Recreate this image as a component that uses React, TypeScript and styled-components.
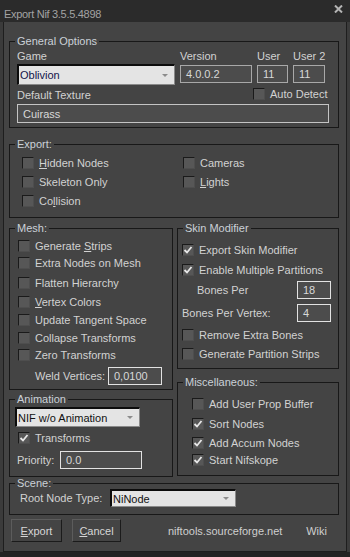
import React from 'react'
import styled, { createGlobalStyle } from 'styled-components'

const GlobalStyle = createGlobalStyle`
  html, body {
    margin: 0;
    padding: 0;
    background: #232323;
  }
  body {
    font-family: 'Liberation Sans', Arial, sans-serif;
    font-size: 11px;
    color: #d2d2d2;
  }
  * {
    box-sizing: border-box;
  }
`

const Window = styled.div`
  width: 350px;
  height: 552px;
  display: flex;
  flex-direction: column;
  background: #3b3b3b;
`

const TitleBar = styled.div`
  height: 22px;
  flex: none;
  background: #2b2b2b;
  display: flex;
  justify-content: space-between;
  padding: 0 7px 0 4px;
  color: #a3a3a3;
`

const Title = styled.span`
  line-height: 13px;
  margin-top: 8px;
  letter-spacing: -0.3px;
`

const Close = styled.svg`
  margin-top: 5px;
`

const Frame = styled.div`
  flex: 1;
  display: flex;
  padding: 0 3px;
`

const Body = styled.div`
  flex: 1;
  display: flex;
  flex-direction: column;
  background: #444444;
  border: 1px solid #1e1e1e;
  border-top: 0;
  padding: 13px 7px 0 5px;
`

const Group = styled.fieldset<{ $mt?: number }>`
  margin: ${({ $mt }) => $mt ?? 0}px 0 0;
  padding: 0;
  min-width: 0;
  border: 1px solid #181818;
`

const Legend = styled.legend`
  margin-left: 5px;
  padding: 0 2px;
  height: 13px;
  line-height: 13px;
  color: #cbd1d8;
`

const Content = styled.div<{ $pad: string }>`
  padding: ${({ $pad }) => $pad};
`

const Label = styled.span`
  line-height: 13px;
  white-space: nowrap;
`

const GeneralGrid = styled.div`
  display: grid;
  grid-template-columns: 158px 72px 31px 32px;
  column-gap: 5px;
  row-gap: 1px;
  align-items: start;
`

const TextureRow = styled.div`
  display: grid;
  grid-template-columns: 236px auto;
  height: 17px;
  align-items: start;
`

const Select = styled.div<{ $w: number; $h: number; $ink?: string }>`
  width: ${({ $w }) => $w}px;
  height: ${({ $h }) => $h}px;
  background: #e4e4e4;
  border-style: solid;
  border-width: 2px 1px 1px 2px;
  border-color: #0c0c0c #8a8a8a #8a8a8a #0c0c0c;
  padding-left: 1px;
  display: flex;
  align-items: center;
  justify-content: space-between;
  color: ${({ $ink }) => $ink ?? '#111'};
`

const Arrow = styled.span`
  width: 0;
  height: 0;
  border-left: 3px solid transparent;
  border-right: 3px solid transparent;
  border-top: 3px solid #8c8c8c;
  margin-right: 6px;
`

const Field = styled.div<{ $w?: number; $h: number; $mt?: number; $tone?: string }>`
  width: ${({ $w }) => ($w ? `${$w}px` : '100%')};
  height: ${({ $h }) => $h}px;
  margin-top: ${({ $mt }) => $mt ?? 0}px;
  background: #4c4c4c;
  border: 1px solid ${({ $tone }) => $tone ?? '#a8a8a8'};
  padding-left: 5px;
  display: flex;
  align-items: center;
  color: #d8d8d8;
`

const CheckRow = styled.div<{ $mt?: number }>`
  display: flex;
  align-items: center;
  gap: 5px;
  height: 12px;
  line-height: 12px;
  margin-top: ${({ $mt }) => $mt ?? 0}px;
  white-space: nowrap;
`

const Box = styled.span`
  width: 12px;
  height: 12px;
  flex: none;
  background: #575757;
  border: 1px solid;
  border-color: #1a1a1a #4e4e4e #4e4e4e #1a1a1a;
  display: flex;
  align-items: center;
  justify-content: center;
`

const ExportGrid = styled.div`
  display: grid;
  grid-template-columns: 161px 1fr;
  grid-auto-rows: 19px;
  align-items: center;
`

const Columns = styled.div`
  display: grid;
  grid-template-columns: 164px 162px;
  column-gap: 4px;
  align-items: start;
  margin-top: 4px;
`

const Column = styled.div`
  display: flex;
  flex-direction: column;
`

const SpinRow = styled.div<{ $cols: string; $mt?: number; $indent?: number }>`
  display: grid;
  grid-template-columns: ${({ $cols }) => $cols};
  align-items: center;
  margin-top: ${({ $mt }) => $mt ?? 0}px;
  padding-left: ${({ $indent }) => $indent ?? 0}px;
`

const Footer = styled.div`
  display: flex;
  align-items: center;
  margin-top: 4px;
  padding: 0 12px 0 2px;
`

const Button = styled.button<{ $w: number; $ml?: number }>`
  width: ${({ $w }) => $w}px;
  height: 23px;
  margin-left: ${({ $ml }) => $ml ?? 0}px;
  padding: 0;
  background: #444444;
  border: 1px solid;
  border-color: #5c5c5c #1b1b1b #1b1b1b #5c5c5c;
  color: #d6d6d6;
  font: inherit;
`

const Link = styled.span<{ $ml?: string }>`
  margin-left: ${({ $ml }) => $ml ?? '0'};
  color: #cfcfcf;
`

const Key = styled.u`
  text-underline-offset: 1px;
`

const Check = ({ on }: { on?: boolean }) => (
  <Box>
    {on && (
      <svg width="10" height="10" viewBox="0 0 10 10">
        <path d="M1.5 5 L4 7.5 L8.5 2" stroke="#e8e8e8" strokeWidth="1.8" fill="none" />
      </svg>
    )}
  </Box>
)

type OptionProps = {
  children: React.ReactNode
  on?: boolean
  mt?: number
}

const Option = ({ children, on, mt }: OptionProps) => (
  <CheckRow $mt={mt}>
    <Check on={on} />
    <span>{children}</span>
  </CheckRow>
)

const App = () => {
  return (
    <>
      <GlobalStyle />
      <Window>
        <TitleBar>
          <Title>Export Nif 3.5.5.4898</Title>
          <Close width="9" height="8" viewBox="0 0 9 8">
            <path d="M1 0.5 L8 7.5 M8 0.5 L1 7.5" stroke="#b4b4b4" strokeWidth="2" />
          </Close>
        </TitleBar>
        <Frame>
          <Body>
            <Group>
              <Legend>General Options</Legend>
              <Content $pad="2px 9px 4px 7px">
                <GeneralGrid>
                  <Label>Game</Label>
                  <Label>Version</Label>
                  <Label>User</Label>
                  <Label>User 2</Label>
                  <Select $w={158} $h={21} $ink="#14144a">
                    <span>Oblivion</span>
                    <Arrow />
                  </Select>
                  <Field $h={18} $mt={1}>4.0.0.2</Field>
                  <Field $h={18} $mt={1}>11</Field>
                  <Field $h={18} $mt={1}>11</Field>
                </GeneralGrid>
                <TextureRow>
                  <Label style={{ marginTop: 4 }}>Default Texture</Label>
                  <CheckRow $mt={3}>
                    <Check />
                    <span>Auto Detect</span>
                  </CheckRow>
                </TextureRow>
                <Field $h={19} $mt={2} $tone="#c4c4c4">
                  Cuirass
                </Field>
              </Content>
            </Group>

            <Group $mt={10}>
              <Legend>Export:</Legend>
              <Content $pad="2px 8px 7px 12px">
                <ExportGrid>
                  <Option>
                    <Key>H</Key>idden Nodes
                  </Option>
                  <Option>Cameras</Option>
                  <Option>Skeleton Only</Option>
                  <Option>
                    <Key>L</Key>ights
                  </Option>
                  <Option>
                    Co<Key>l</Key>lision
                  </Option>
                </ExportGrid>
              </Content>
            </Group>

            <Columns>
              <Column>
                <Group>
                  <Legend>Mesh:</Legend>
                  <Content $pad="5px 4px 4px 8px">
                    <Option>
                      Generate <Key>S</Key>trips
                    </Option>
                    <Option mt={5}>Extra Nodes on Mesh</Option>
                    <Option mt={8}>Flatten Hierarchy</Option>
                    <Option mt={7}>
                      <Key>V</Key>ertex Colors
                    </Option>
                    <Option mt={6}>Update Tangent Space</Option>
                    <Option mt={6}>Collapse Transforms</Option>
                    <Option mt={5}>Zero Transforms</Option>
                    <SpinRow $cols="73px 54px" $mt={6} $indent={17}>
                      <Label>Weld Vertices:</Label>
                      <Field $w={54} $h={18} $tone="#e2e2e2">
                        0,0100
                      </Field>
                    </SpinRow>
                  </Content>
                </Group>

                <Group $mt={3}>
                  <Legend>Animation</Legend>
                  <Content $pad="1px 4px 7px 5px">
                    <Select $w={125} $h={20}>
                      <span>NIF w/o Animation</span>
                      <Arrow />
                    </Select>
                    <Content $pad="0 0 0 3px">
                      <Option on mt={5}>
                        Transforms
                      </Option>
                    </Content>
                    <SpinRow $cols="43px 82px" $mt={7} $indent={2}>
                      <Label>Priority:</Label>
                      <Field $w={82} $h={18} $tone="#e2e2e2">
                        0.0
                      </Field>
                    </SpinRow>
                  </Content>
                </Group>
              </Column>

              <Column>
                <Group>
                  <Legend>Skin Modifier</Legend>
                  <Content $pad="9px 4px 8px 4px">
                    <Option on>Export Skin Modifier</Option>
                    <Option on mt={8}>
                      Enable Multiple Partitions
                    </Option>
                    <SpinRow $cols="100px 34px" $mt={5} $indent={15}>
                      <Label>Bones Per</Label>
                      <Field $w={34} $h={18} $tone="#e2e2e2">
                        18
                      </Field>
                    </SpinRow>
                    <SpinRow $cols="115px 34px" $mt={5}>
                      <Label>Bones Per Vertex:</Label>
                      <Field $w={34} $h={18} $tone="#e2e2e2">
                        4
                      </Field>
                    </SpinRow>
                    <Option mt={7}>Remove Extra Bones</Option>
                    <Option mt={7}>Generate Partition Strips</Option>
                  </Content>
                </Group>

                <Group $mt={7}>
                  <Legend>Miscellaneous:</Legend>
                  <Content $pad="9px 4px 9px 14px">
                    <Option>Add User Prop Buffer</Option>
                    <Option on mt={8}>
                      Sort Nodes
                    </Option>
                    <Option on mt={7}>
                      Add Accum Nodes
                    </Option>
                    <Option on mt={5}>
                      Start Nifskope
                    </Option>
                  </Content>
                </Group>
              </Column>
            </Columns>

            <Group>
              <Legend>Scene:</Legend>
              <Content $pad="0 8px 7px 10px" style={{ marginTop: -1 }}>
                <SpinRow $cols="90px 126px">
                  <Label>Root Node Type:</Label>
                  <Select $w={126} $h={18}>
                    <span>NiNode</span>
                    <Arrow />
                  </Select>
                </SpinRow>
              </Content>
            </Group>

            <Footer>
              <Button $w={51}>
                <Key>E</Key>xport
              </Button>
              <Button $w={49} $ml={10}>
                <Key>C</Key>ancel
              </Button>
              <Link $ml="47px">niftools.sourceforge.net</Link>
              <Link $ml="auto">Wiki</Link>
            </Footer>
          </Body>
        </Frame>
      </Window>
    </>
  )
}

export default App
